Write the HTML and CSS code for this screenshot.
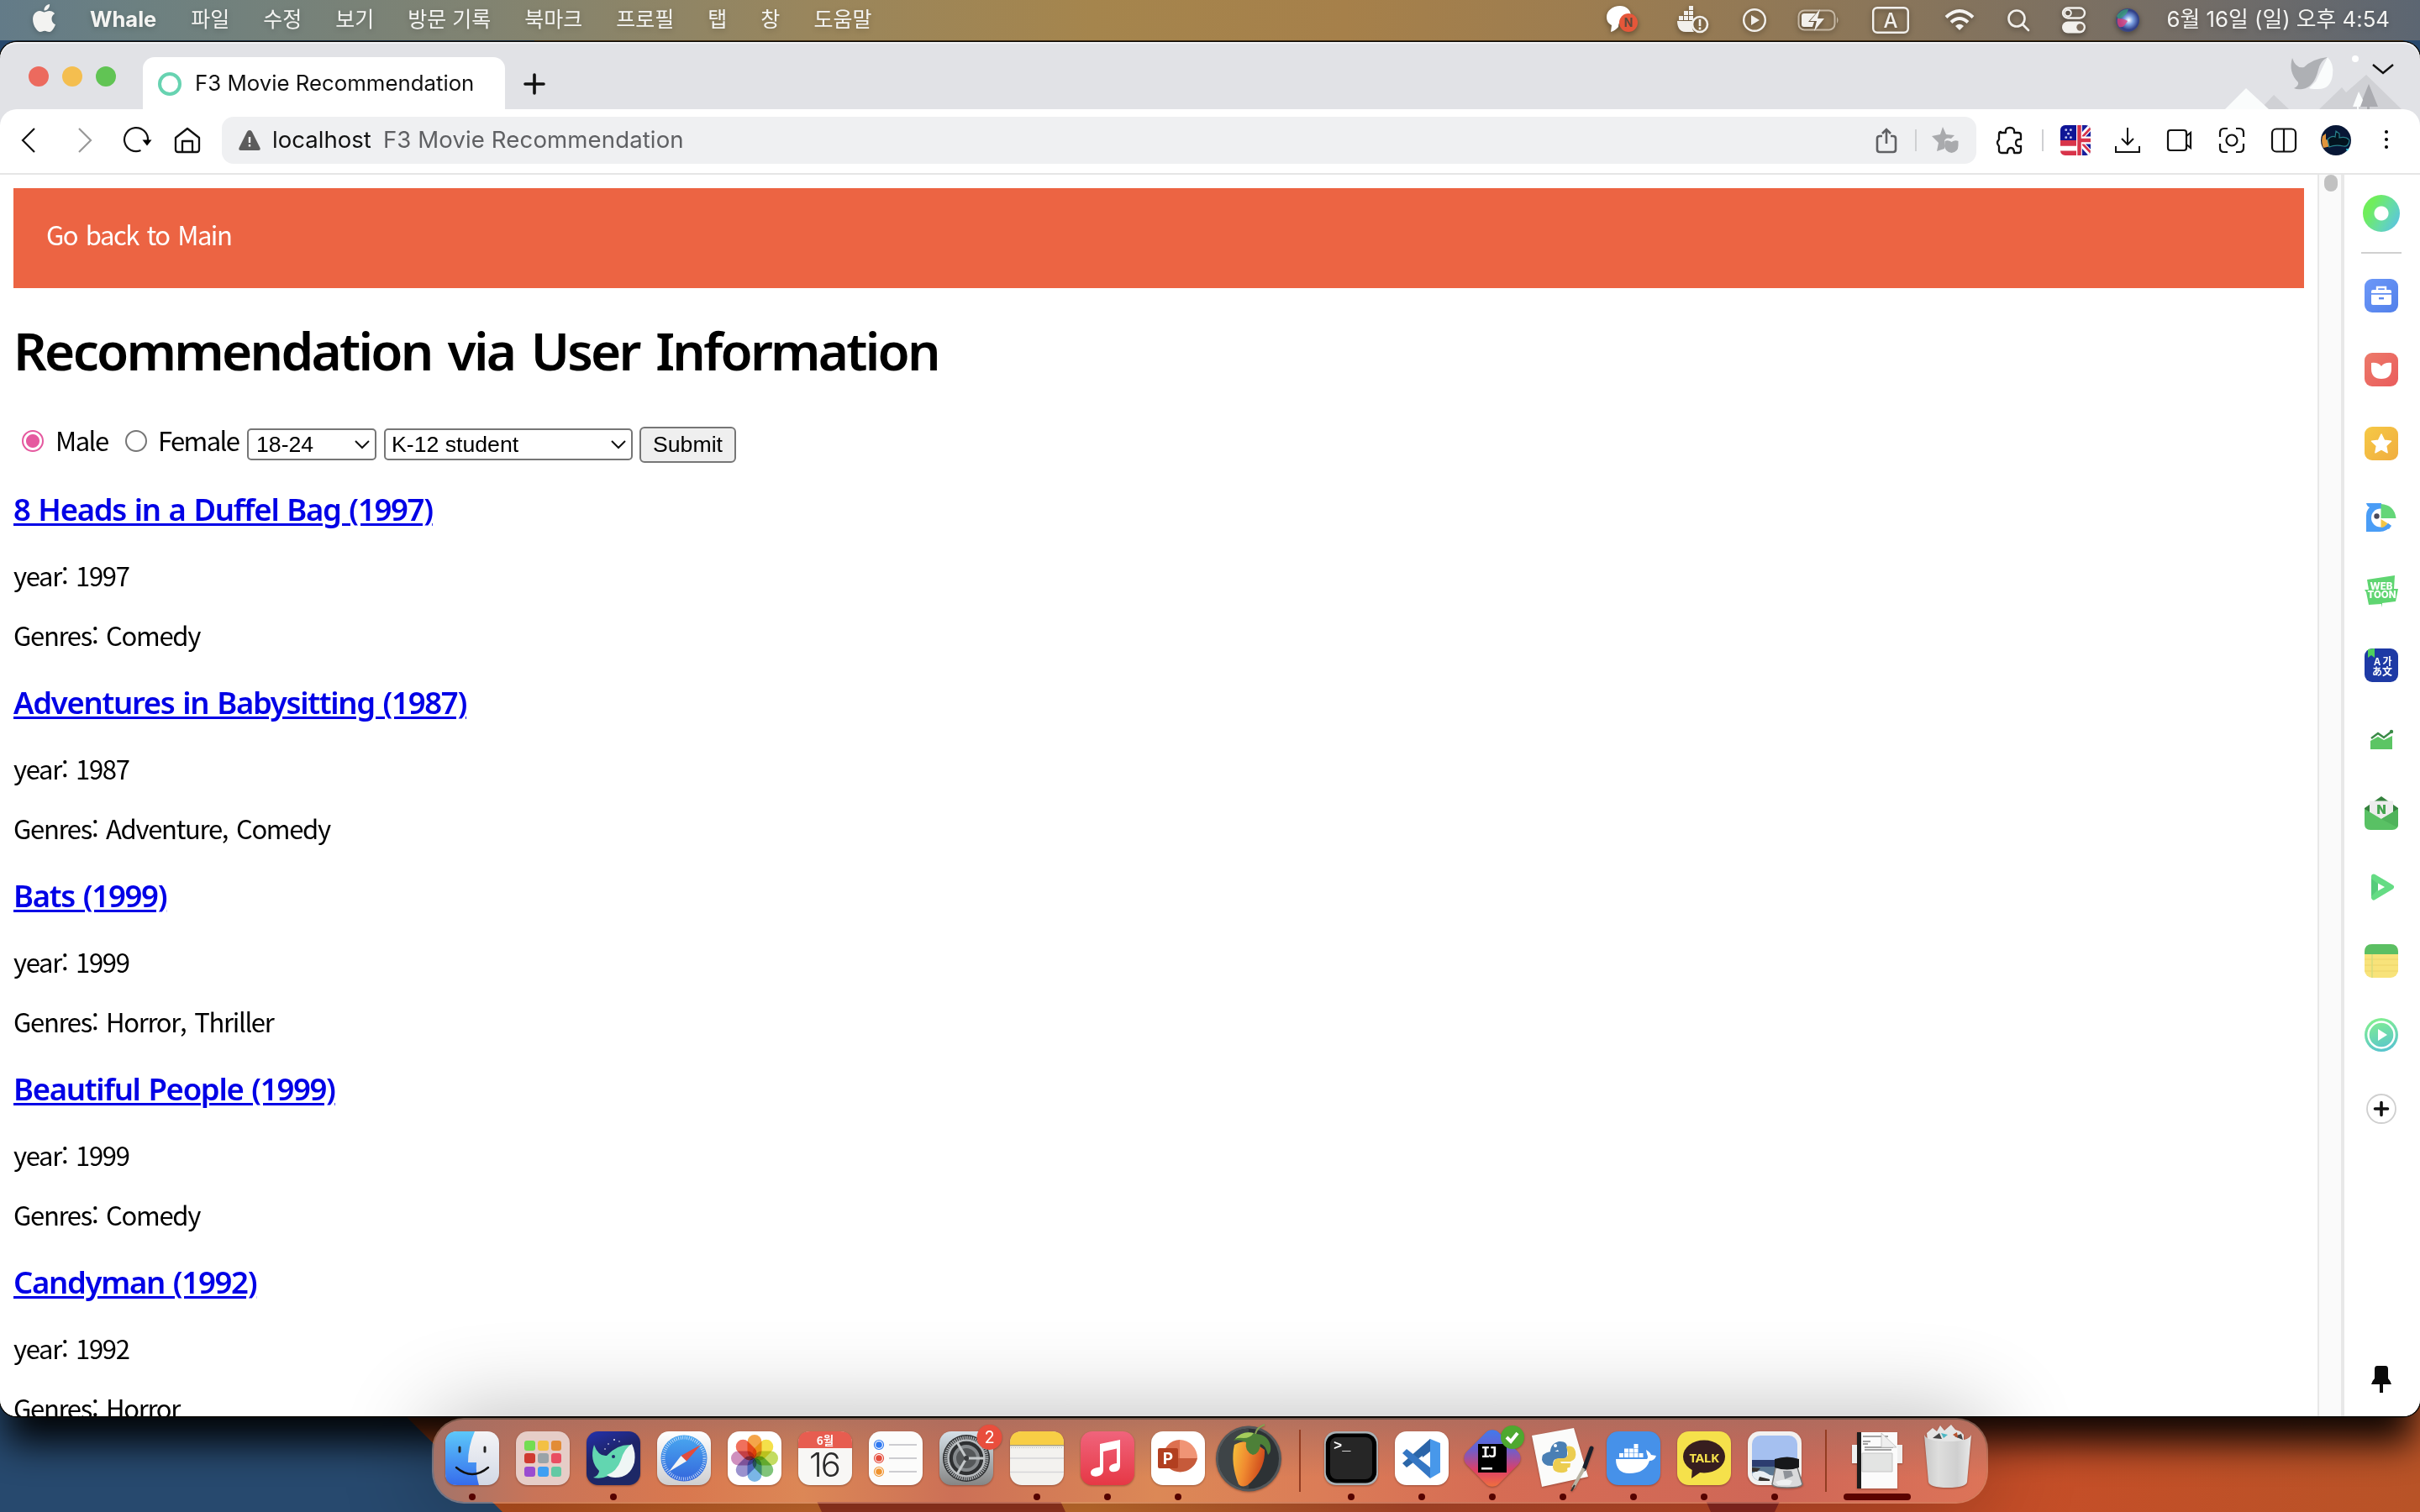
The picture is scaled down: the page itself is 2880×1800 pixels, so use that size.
FILE: index.html
```html
<!DOCTYPE html>
<html lang="ko">
<head>
<meta charset="utf-8">
<title>F3 Movie Recommendation</title>
<link rel="stylesheet" href="styles.css">
</head>
<body>
<div class="desktop">
  <svg class="wallpaper" viewBox="0 0 2880 1800" preserveAspectRatio="none" aria-hidden="true">
    <defs>
      <linearGradient id="wo" x1="480" x2="2880" y1="0" y2="0" gradientUnits="userSpaceOnUse">
        <stop offset="0" stop-color="#b4481b"/><stop offset=".2" stop-color="#c8692c"/><stop offset=".34" stop-color="#c8702e"/><stop offset=".5" stop-color="#b4492a"/><stop offset=".68" stop-color="#c04a28"/><stop offset=".8" stop-color="#c64e28"/><stop offset="1" stop-color="#b85327"/>
      </linearGradient>
    </defs>
    <rect width="2880" height="1800" fill="#27496e"/>
    <path d="M400 1600H2880V1800H598L485 1688z" fill="url(#wo)"/>
    <path d="M950 1740L978 1800H1268L1240 1740z" fill="#97351f"/>
    <path d="M2010 1740L2036 1800H2112L2140 1740z" fill="#8c2821"/>
    <path d="M636 48H2860V60H636z" fill="#6f4a1c"/>
  </svg>

  <header class="menubar">
    <svg class="apple" viewBox="0 0 24 24"><path fill="#f3f3f1" d="M12.152 6.896c-.948 0-2.415-1.078-3.96-1.04-2.04.027-3.91 1.183-4.961 3.014-2.117 3.675-.546 9.103 1.519 12.09 1.013 1.454 2.208 3.09 3.792 3.039 1.52-.065 2.09-.987 3.935-.987 1.831 0 2.35.987 3.96.948 1.637-.026 2.676-1.48 3.676-2.948 1.156-1.688 1.636-3.325 1.662-3.415-.039-.013-3.182-1.221-3.22-4.857-.026-3.04 2.48-4.494 2.597-4.559-1.429-2.09-3.623-2.324-4.39-2.376-2-.156-3.675 1.09-4.61 1.09zM15.53 3.83c.843-1.012 1.4-2.427 1.245-3.83-1.207.052-2.662.805-3.532 1.818-.78.896-1.454 2.338-1.273 3.714 1.338.104 2.715-.688 3.559-1.701"/></svg>
    <b class="app-name">Whale</b>
    <nav class="menus"><span>파일</span><span>수정</span><span>보기</span><span>방문 기록</span><span>북마크</span><span>프로필</span><span>탭</span><span>창</span><span>도움말</span></nav>
    <div class="status">
      <svg class="st-chat" width="38" height="34" viewBox="0 0 38 34"><path fill="#fff" d="M17 1C8 1 1 7 1 14c0 5 2 8 6 10l-1 8c4-1 7-4 9-6 0-7 5-11 15-14C29 5 24 1 17 1z"/><circle cx="27" cy="21" r="11" fill="#e5573a"/><text x="27" y="26" text-anchor="middle" class="t-n">N</text></svg>
      <svg class="st-docker" width="38" height="34" viewBox="0 0 38 34" fill="#f2f0ec"><path d="M3 12h5v5H3zM9 12h5v5H9zM15 12h5v5h-5zM9 6h5v5H9zM15 6h5v5h-5zM15 0h5v5h-5zM1 18h20c-3 5-3 9 0 13H11C4 31 1 25 1 18z"/><circle cx="28" cy="22" r="9" fill="none" stroke="#f2f0ec" stroke-width="2.6"/><path d="M26.7 16h2.6v8h-2.6zM26.7 25.500h2.600v2.800h-2.600z"/></svg>
      <svg class="st-play" width="30" height="30" viewBox="0 0 30 30"><circle cx="15" cy="15" r="12.800" fill="none" stroke="#f2f0ec" stroke-width="2.400"/><path fill="#f2f0ec" d="M11 9l10 6-10 6z"/></svg>
      <svg class="st-bat" width="50" height="28" viewBox="0 0 50 28"><rect x="1.500" y="2.500" width="43" height="23" rx="7" fill="none" stroke="#c6b8a4" stroke-width="2"/><path fill="#c6b8a4" d="M47 10q3 4 0 8z"/><path fill="#f2f0ec" d="M8 6h14l-9 10h7l-2 6H8q-3 0-3-3V9q0-3 3-3z"/><path fill="#f2f0ec" d="M27 1L15 15h8l-3 12 12-15h-8z"/></svg>
      <svg class="st-a" width="44" height="32" viewBox="0 0 44 32"><rect x="1.200" y="1.200" width="41.600" height="29.600" rx="5" fill="none" stroke="#f2f0ec" stroke-width="2.400"/><text x="22" y="24.500" text-anchor="middle" class="t-a">A</text></svg>
      <svg class="st-wifi" width="36" height="26" viewBox="0 0 36 26"><g fill="none" stroke="#f5f3f0" stroke-width="4"><path d="M2 9.500q16-15 32 0"/><path d="M8 15.500q10-9 20 0"/></g><path fill="#f5f3f0" d="M18 25l-5-5q5-4.500 10 0z"/></svg>
      <svg class="st-find" width="28" height="28" viewBox="0 0 28 28"><g fill="none" stroke="#f2f0ec" stroke-width="2.600" stroke-linecap="round"><circle cx="12" cy="12" r="9.500"/><path d="M19 19l7 7"/></g></svg>
      <svg class="st-ctl" width="30" height="32" viewBox="0 0 30 32"><rect x="2" y="1.500" width="26" height="12" rx="6" fill="none" stroke="#f2f0ec" stroke-width="2.400"/><circle cx="8" cy="7.500" r="3.800" fill="none" stroke="#f2f0ec" stroke-width="2"/><rect x="1" y="17.500" width="28" height="14" rx="7" fill="#f2f0ec"/><circle cx="22.500" cy="24.500" r="4.200" fill="#7a6c5c"/></svg>
      <svg class="st-siri" width="30" height="30" viewBox="0 0 30 30"><defs><radialGradient id="siri" cx=".55" cy=".5" r=".55"><stop offset="0" stop-color="#fff"/><stop offset=".35" stop-color="#7a9fe0"/><stop offset=".75" stop-color="#2f3f88"/><stop offset="1" stop-color="#4a4f78"/></radialGradient></defs><circle cx="15" cy="15" r="14" fill="url(#siri)"/><path d="M2 10q6-9 14-8-2 8-12 12z" fill="#3aa878" opacity=".7"/><path d="M3 13q8 0 12 3-5 9-10 7-3-4-2-10z" fill="#e0407c" opacity=".8"/></svg>
      <span class="clock">6월 16일 (일) 오후 4:54</span>
    </div>
  </header>

  <section class="window">
    <div class="tabstrip">
      <div class="lights"><i class="red"></i><i class="yellow"></i><i class="green"></i></div>
      <div class="tab"><i class="spinner"></i><span>F3 Movie Recommendation</span></div>
      <svg class="plus" width="28" height="28" viewBox="0 0 28 28"><path d="M14 3v22M3 14h22" stroke="#111" stroke-width="3.600" stroke-linecap="round"/></svg>
      <svg class="scene" width="230" height="80" viewBox="0 0 230 80">
        <path fill="#d0d1d5" d="M110 80l27-26 5 6 24-21 42 41z"/>
        <path fill="#d0d1d5" d="M40 80l16-17 18 17z"/>
        <path fill="#fafcfc" d="M-2 80l25-25 27 25z"/>
        <path fill="#aaabb0" d="M169 50l-11 27h9v3h3v-3h10z"/><path fill="#fafcfc" d="M157 59l-7 18h5v3h2v-3h2l3-8z"/>
        <path fill="#fafcfc" d="M120 18q8 8 6 21-2 18-19 17-7 0-9-1l8-8q8-17 14-29z"/>
        <path fill="#aeb0b4" d="M78 19q4 13 14 11 10-10 28-12-9 5-11 15-5 21-19 23-6 1-10-1 6-3 5-7-12-12-7-29z"/>
        <circle cx="153" cy="20" r="4" fill="#fff"/>
        <path d="M174 27l12 10 12-10" fill="none" stroke="#111" stroke-width="2.400"/>
      </svg>
    </div>

    <div class="toolbar">
      <svg width="56" height="36" viewBox="0 0 56 36"><path d="M34 4L20 18l14 14" fill="none" stroke="#111" stroke-width="2.200"/></svg>
      <svg width="56" height="36" viewBox="0 0 56 36"><path d="M31 4l14 14-14 14" fill="none" stroke="#999" stroke-width="2.200"/></svg>
      <svg width="72" height="36" viewBox="0 0 72 36"><path d="M48.500 30A14 14 0 1 1 57 18" fill="none" stroke="#111" stroke-width="2.200"/><path d="M50.500 17.500h11l-5.500 7z"/></svg>
      <svg width="74" height="36" viewBox="0 0 74 36"><path d="M18 15L32 4l14 11v14q0 3-3 3H21q-3 0-3-3zM26 32V19h12v13" fill="none" stroke="#111" stroke-width="2.300" stroke-linejoin="round"/></svg>
      <div class="address">
        <svg width="28" height="26" viewBox="0 0 28 26"><path d="M14 1q2 0 3 2l9.500 19q1 3-2 3H3.500q-3 0-2-3L11 3q1-2 3-2z" fill="#5c5c5c"/><path d="M12.800 9h2.400v7h-2.400zM12.800 18h2.400v2.400h-2.400z" fill="#fff"/></svg>
        <span class="host">localhost</span><span class="page-name">F3 Movie Recommendation</span>
        <svg class="share" width="26" height="32" viewBox="0 0 26 32"><path d="M8 11H5q-3 0-3 3v13q0 3 3 3h16q3 0 3-3V14q0-3-3-3h-3M13 20V3M8 8l5-5 5 5" fill="none" stroke="#5f6063" stroke-width="2.600"/></svg>
        <i class="bar"></i>
        <svg class="star" width="34" height="32" viewBox="0 0 34 32"><path fill="#a9aaad" d="M14 0l4 9 10 1-4 4q-7-2-8 3l1 6-1 3-9 3 2-10-8-8 10-2z"/><path fill="#a9aaad" d="M16.500 17q4-2 8 1 4-3 8-1v5q0 8-8 9-8-1-8-9z"/></svg>
      </div>
      <svg class="puzzle" width="32" height="34" viewBox="0 0 32 34"><path d="M5 8h6q-1-6 5-6t5 6h5q3 0 3 3v5q-6-1-6 4t6 4v5q0 3-3 3h-5q0-6-4-6t-4 6H6q-3 0-3-3v-5q-2-2-2-4t2-4v-6q0-3 2-3z" fill="none" stroke="#111" stroke-width="2.300" stroke-linejoin="round"/></svg>
      <i class="bar"></i>
      <div class="exts">
        <svg width="32" height="32" viewBox="0 0 32 32"><clipPath id="fl"><rect width="32" height="32" rx="5"/></clipPath><g clip-path="url(#fl)"><path fill="#fff" d="M0 0h32v32H0z"/><path fill="#0f1596" d="M0 0h17v17H0z"/><path fill="#d8344a" d="M0 16h17v6H0zM0 27h17v5H0z"/><g fill="#c3c6ee"><circle cx="6" cy="5" r="1.300"/><circle cx="11" cy="5" r="1.300"/><circle cx="8.500" cy="9" r="1.300"/><circle cx="6" cy="13" r="1.300"/><circle cx="11" cy="13" r="1.300"/></g><path fill="#1a1f9c" d="M19 0h13v32H19z"/><path d="M19 16L32 2M19 16l13 14" stroke="#fff" stroke-width="6"/><path d="M20 16L33 2M20 16l13 14" stroke="#d8344a" stroke-width="2.500"/><path fill="#fff" d="M17 0h6v32h-6zM19 12h13v8H19z"/><path fill="#d8344a" d="M18 0h4v32h-4zM20 14h12v4H20z"/></g></svg>
        <svg width="32" height="32" viewBox="0 0 32 32"><path d="M16 1v20M9 14l7 7 7-7M2 23v7h28v-7" fill="none" stroke="#111" stroke-width="2"/></svg>
        <svg width="32" height="32" viewBox="0 0 32 32"><path d="M5 4h16q3 0 3 3v18q0 3-3 3H5q-3 0-3-3V7q0-3 3-3zM24 11l5-4v18l-5-4" fill="none" stroke="#111" stroke-width="2.200"/></svg>
        <svg width="32" height="32" viewBox="0 0 32 32"><g fill="none" stroke="#111" stroke-width="2.200"><path d="M11 2H7Q2 2 2 7v5M21 2h4q5 0 5 5v5M11 30H7q-5 0-5-5v-5M21 30h4q5 0 5-5v-5"/><circle cx="16" cy="16" r="6.500"/></g></svg>
        <svg width="32" height="32" viewBox="0 0 32 32"><rect x="2" y="2.500" width="28" height="27" rx="5" fill="none" stroke="#111" stroke-width="2.200"/><path d="M16 3v26" stroke="#111" stroke-width="2.200"/></svg>
        <svg width="36" height="36" viewBox="0 0 36 36"><circle cx="18" cy="18" r="18" fill="#081736"/><path d="M2 13l4-3v7l6 2v6l-9 2q-3-7-1-14z" fill="#e0953c"/><path d="M8 17q5-5 9-3l1-7 4 3v5q8-2 12 3-1 8-7 7-10-2-17 1z" fill="#03131f" stroke="#27808b" stroke-width="1.200"/><path d="M30 28h4l-3 3z" fill="#3cc9dd"/></svg>
        <svg width="32" height="32" viewBox="0 0 32 32"><circle cx="14" cy="6" r="2"/><circle cx="14" cy="15" r="2"/><circle cx="14" cy="24" r="2"/></svg>
      </div>
    </div>

    <div class="body">
      <main class="page">
        <nav class="topnav"><a>Go back to Main</a></nav>
        <h1>Recommendation via User Information</h1>
        <form class="filters">
          <i class="radio on"></i><label class="male">Male</label>
          <i class="radio off"></i><label class="female">Female</label>
          <div class="select age"><span>18-24</span><svg width="18" height="10" viewBox="0 0 18 10"><path d="M1 1l8 8 8-8" fill="none" stroke="#111" stroke-width="2"/></svg></div>
          <div class="select job"><span>K-12 student</span><svg width="18" height="10" viewBox="0 0 18 10"><path d="M1 1l8 8 8-8" fill="none" stroke="#111" stroke-width="2"/></svg></div>
          <button type="button">Submit</button>
        </form>
        <article><h3><a>8 Heads in a Duffel Bag (1997)</a></h3><p>year: 1997</p><p>Genres: Comedy</p></article>
        <article><h3><a>Adventures in Babysitting (1987)</a></h3><p>year: 1987</p><p>Genres: Adventure, Comedy</p></article>
        <article><h3><a>Bats (1999)</a></h3><p>year: 1999</p><p>Genres: Horror, Thriller</p></article>
        <article><h3><a>Beautiful People (1999)</a></h3><p>year: 1999</p><p>Genres: Comedy</p></article>
        <article><h3><a>Candyman (1992)</a></h3><p>year: 1992</p><p>Genres: Horror</p></article>
      </main>
      <div class="scroll"><i></i></div>
      <aside class="side">
        <i class="ring"></i>
        <i class="rule"></i>
        <div class="apps">
          <svg viewBox="0 0 40 40"><defs><linearGradient id="g1" x2="1" y2="1"><stop stop-color="#6c98f8"/><stop offset="1" stop-color="#5280ea"/></linearGradient></defs><rect width="40" height="40" rx="9" fill="url(#g1)"/><path d="M15 14v-4h10v4" fill="none" stroke="#fff" stroke-width="2.400"/><path fill="#fff" d="M10 13h20q2 0 2 2v2H8v-2q0-2 2-2zM8 18.800h24V29q0 2-2 2H10q-2 0-2-2z"/><path fill="#5b88ef" d="M17 22h6v2.400h-6z"/></svg>
          <svg viewBox="0 0 40 40"><defs><linearGradient id="g2" x2="1" y2="1"><stop stop-color="#ec7a6a"/><stop offset="1" stop-color="#ea5c5c"/></linearGradient></defs><rect width="40" height="40" rx="9" fill="url(#g2)"/><path fill="#fff" d="M8 12q8-1 12 4 4-5 12-4v7q0 12-12 12T8 19z"/></svg>
          <svg viewBox="0 0 40 40"><defs><linearGradient id="g3" x2="1" y2="1"><stop stop-color="#f6c945"/><stop offset="1" stop-color="#f0ad40"/></linearGradient></defs><rect width="40" height="40" rx="9" fill="url(#g3)"/><path fill="#fff" stroke="#fff" stroke-width="1.500" stroke-linejoin="round" d="M20 9l3.500 7.300 8 1-5.900 5.500 1.500 8-7.100-3.900-7.100 3.900 1.500-8-5.900-5.500 8-1z"/></svg>
          <svg viewBox="0 0 40 40"><path fill="#4a9df6" d="M2 3h18v4l12 22q-5 8-14 8H2V18q0-6 4-10-3-1-4-5z"/><circle cx="19" cy="20.500" r="11" fill="#fff"/><path fill="#fff" d="M20 7h19v20l-7 3-12-8z"/><path fill="#64d678" d="M19.500 4q16 1 18 17h-18z"/><path fill="#f3c545" d="M19.500 22l8 5q-3 5-8 5z"/><path fill="#4a9df6" d="M28 27l4 3-3 4-5-3z"/><circle cx="14.500" cy="18.500" r="3.200" fill="#4a4a5c"/></svg>
          <svg viewBox="0 0 40 40"><path fill="#5fd571" d="M3 6l33-5-1 16h5l-3 15-16 2v5l-1-4-15 1-3-15-2-3h5z"/><text x="20" y="18" text-anchor="middle" class="t-web">WEB</text><text x="20.500" y="27.500" text-anchor="middle" class="t-web">TOON</text></svg>
          <svg viewBox="0 0 40 40"><rect width="40" height="40" rx="9" fill="#1e3aa5"/><path fill="#4fd05d" d="M4 1l8-1v11l-4-3-4 3z"/><text x="15" y="20" text-anchor="middle" class="t-tr">A</text><text x="27" y="20" text-anchor="middle" class="t-tr">가</text><text x="15" y="32" text-anchor="middle" class="t-tr">あ</text><text x="27" y="32" text-anchor="middle" class="t-tr">文</text></svg>
          <svg viewBox="0 0 40 40"><path fill="#5cc564" d="M7 22l9-5 7 4 10-5v16H7z"/><path d="M8 19l8-6 7 5 9-7" fill="none" stroke="#3a8a47" stroke-width="2.400"/><circle cx="32" cy="11" r="2.200" fill="#3a8a47"/></svg>
          <svg viewBox="0 0 40 40"><path fill="#35823e" d="M0 14l20-14 20 14v8H0z"/><path fill="#ececec" d="M6 5.500h28V24L20 30 6 24z"/><path fill="#59c164" d="M0 15l20 12 20-12v18q0 7-7 7H7q-7 0-7-7z"/><path fill="#4fb35b" d="M20 27l20-12v18q0 2-1 4z"/><text x="20" y="20.500" text-anchor="middle" class="t-mail">N</text></svg>
          <svg viewBox="0 0 40 40"><path fill="#65dc84" stroke="#65dc84" stroke-width="6" stroke-linejoin="round" d="M11 7.500l21 12.500-21 12.500z"/><path fill="#4cc274" d="M8 10l9 7v5l-9 9z" opacity=".6"/><path fill="#fff" d="M16 15.500l8 4.500-8 4.500z"/></svg>
          <svg viewBox="0 0 40 40"><rect width="40" height="40" rx="9" fill="#f8e37a"/><path fill="#5bbf63" d="M9 0h22q9 0 9 9v3H0V9q0-9 9-9z"/><path d="M0 18h40M0 25h40M0 32h40" stroke="#eed468" stroke-width="1"/><path d="M9 12v28" stroke="#d5dd7c" stroke-width="1.500"/></svg>
          <svg viewBox="0 0 40 40"><defs><linearGradient id="g4" x1=".3" x2=".6" y2="1"><stop stop-color="#83f08e"/><stop offset="1" stop-color="#58c4cf"/></linearGradient></defs><circle cx="20" cy="20" r="20" fill="url(#g4)"/><circle cx="20" cy="20" r="15.500" fill="none" stroke="#fff" stroke-width="2.400"/><path fill="#fff" d="M16 13l11 7-11 7z"/></svg>
          <svg viewBox="0 0 40 40"><circle cx="20" cy="20" r="17" fill="#fff" stroke="#cfcfcf" stroke-width="1.800"/><path d="M20 12.500v15M12.500 20h15" stroke="#111" stroke-width="3.600" stroke-linecap="round"/></svg>
        </div>
        <svg class="pin" width="24" height="32" viewBox="0 0 24 32"><path fill="#0a0a0a" d="M7 0h10q3 0 3 4v11q3 3 4 7H0q1-4 4-7V4q0-4 3-4zM10 22h4v10h-4z"/></svg>
      </aside>
    </div>
  </section>

  <div class="dock-layer"><div class="dock">
    <div class="item run"><svg viewBox="0 0 64 64"><defs><linearGradient id="fa" y2="1" x2="0"><stop stop-color="#5cc8fa"/><stop offset="1" stop-color="#366cec"/></linearGradient><linearGradient id="fb" y2="1" x2="0"><stop stop-color="#f4f4f6"/><stop offset="1" stop-color="#d2d9e6"/></linearGradient></defs><rect width="64" height="64" rx="14" fill="url(#fb)"/><path fill="url(#fa)" d="M14 0h21q-8 18-8 37h10q-1 14 3 27H14Q0 64 0 50V14Q0 0 14 0z"/><path d="M17 19v5M47 19v5" stroke="#222" stroke-width="3" stroke-linecap="round"/><path d="M13 43q19 16 38 0" fill="none" stroke="#111" stroke-width="2.400" stroke-linecap="round"/></svg></div>
    <div class="item"><svg viewBox="0 0 64 64"><rect width="64" height="64" rx="14" fill="#e6cdc7"/><g><rect x="10" y="11" width="13" height="12" rx="3" fill="#74dd52"/><rect x="26" y="11" width="13" height="12" rx="3" fill="#f3c044"/><rect x="42" y="11" width="12" height="12" rx="3" fill="#e28c36"/><rect x="10" y="26" width="13" height="12" rx="3" fill="#cf3a30"/><rect x="26" y="26" width="13" height="12" rx="3" fill="#9aa3a8"/><rect x="42" y="26" width="12" height="12" rx="3" fill="#e94e62"/><rect x="10" y="42" width="13" height="12" rx="3" fill="#9a4cd0"/><rect x="26" y="42" width="13" height="12" rx="3" fill="#3f9ff2"/><rect x="42" y="42" width="12" height="12" rx="3" fill="#62c9a4"/></g></svg></div>
    <div class="item run"><svg viewBox="0 0 64 64"><defs><linearGradient id="wh" y2="1" x2=".4"><stop stop-color="#2431ad"/><stop offset=".5" stop-color="#1e2468"/><stop offset="1" stop-color="#1d2866"/></linearGradient></defs><rect width="64" height="64" rx="14" fill="url(#wh)"/><path fill="#62d6b0" d="M9 16q5 14 15 13Q36 15 54 16L40 44 26 53q-9 4-18 2 7-3 7-8Q3 35 9 16z"/><path fill="#eff6f5" d="M54 15q5 10 3 22-5 18-23 18-6 0-10-3 12-4 17-18 4-14 13-19z"/><circle cx="32" cy="30" r="2" fill="#1f2b6b"/><g fill="#fff"><circle cx="33" cy="10" r=".9"/><circle cx="26" cy="15" r=".8"/><circle cx="22" cy="21" r=".8"/><circle cx="39" cy="12" r=".7"/></g></svg></div>
    <div class="item"><svg viewBox="0 0 64 64"><defs><linearGradient id="sf" y2="1" x2="0"><stop stop-color="#49a8f0"/><stop offset="1" stop-color="#3466dc"/></linearGradient><linearGradient id="sg" y2="1" x2="0"><stop stop-color="#fff"/><stop offset="1" stop-color="#cfcfd1"/></linearGradient></defs><rect width="64" height="64" rx="14" fill="url(#sg)"/><circle cx="32" cy="32" r="27.500" fill="url(#sf)"/><circle cx="32" cy="32" r="24.500" fill="none" stroke="#d7e6fa" stroke-width="4" stroke-dasharray=".8 1.766"/><path fill="#e34b3b" d="M52 16L28.500 29 35 35.500z"/><path fill="#f4f4f4" d="M14 48l14.500-19L35 35.500z"/></svg></div>
    <div class="item"><svg viewBox="0 0 64 64"><rect width="64" height="64" rx="14" fill="#fff"/><g class="petals"><rect x="23.500" y="4" width="17" height="28" rx="8.500" fill="#f5a54a"/><rect x="23.500" y="4" width="17" height="28" rx="8.500" fill="#f4e04a" transform="rotate(45 32 32)"/><rect x="23.500" y="4" width="17" height="28" rx="8.500" fill="#c3dc62" transform="rotate(90 32 32)"/><rect x="23.500" y="4" width="17" height="28" rx="8.500" fill="#80c47a" transform="rotate(135 32 32)"/><rect x="23.500" y="4" width="17" height="28" rx="8.500" fill="#7ab6e6" transform="rotate(180 32 32)"/><rect x="23.500" y="4" width="17" height="28" rx="8.500" fill="#9a92ce" transform="rotate(225 32 32)"/><rect x="23.500" y="4" width="17" height="28" rx="8.500" fill="#cf90be" transform="rotate(270 32 32)"/><rect x="23.500" y="4" width="17" height="28" rx="8.500" fill="#f0705c" transform="rotate(315 32 32)"/></g></svg></div>
    <div class="item"><svg viewBox="0 0 64 64"><rect width="64" height="64" rx="14" fill="#f8f7f5"/><path fill="#e75d50" d="M14 0h36q14 0 14 14v6H0v-6Q0 0 14 0z"/><text x="32" y="15.500" text-anchor="middle" class="t-mon">6월</text><text x="31" y="54" text-anchor="middle" class="t-day">16</text></svg></div>
    <div class="item"><svg viewBox="0 0 64 64"><rect width="64" height="64" rx="14" fill="#fcfcfb"/><g fill="#fff" stroke-width="1.200"><circle cx="12" cy="16" r="5.500" stroke="#2f78f0"/><circle cx="12" cy="32" r="5.500" stroke="#e44c3c"/><circle cx="12" cy="48" r="5.500" stroke="#ef9430"/></g><circle cx="12" cy="16" r="3.800" fill="#2f78f0"/><circle cx="12" cy="32" r="3.800" fill="#e44c3c"/><circle cx="12" cy="48" r="3.800" fill="#ef9430"/><path d="M24 16h33M24 32h33M24 48h33" stroke="#bdbdc4" stroke-width="1.500"/></svg></div>
    <div class="item"><svg viewBox="0 0 64 64"><defs><linearGradient id="st" y2="1" x2="0"><stop stop-color="#d5e0e8"/><stop offset="1" stop-color="#868685"/></linearGradient></defs><rect width="64" height="64" rx="14" fill="url(#st)"/><circle cx="32" cy="32" r="28" fill="#2e3032"/><circle cx="32" cy="32" r="24.500" fill="none" stroke="#a9adb0" stroke-width="4" stroke-dasharray="1.500 1"/><circle cx="32" cy="32" r="21.500" fill="none" stroke="#b9bdc0" stroke-width="2.500"/><circle cx="32" cy="32" r="14" fill="#55585a" stroke="#85898c" stroke-width="4"/><path d="M32 32h22M32 32L21 13M32 32L21 51" stroke="#c4c8ca" stroke-width="3"/><circle cx="32" cy="32" r="3" fill="#3a3c3e"/><circle cx="59.500" cy="7" r="15" fill="#e94e3d"/><text x="59.500" y="14" text-anchor="middle" class="t-badge">2</text></svg></div>
    <div class="item run"><svg viewBox="0 0 64 64"><rect width="64" height="64" rx="14" fill="#f3f2ef"/><path fill="#f8ce45" d="M14 0h36q14 0 14 14v2H0v-2Q0 0 14 0z"/><path d="M0 16.700h64" stroke="#a79f80" stroke-width="1.400"/><path d="M1 19.500h62" stroke="#bbb" stroke-dasharray="1 1.500"/><path d="M0 32h64M0 48.500h64" stroke="#d5d5d8" stroke-width="1.300"/></svg></div>
    <div class="item run"><svg viewBox="0 0 64 64"><defs><linearGradient id="mu" y2="1" x2="0"><stop stop-color="#f0647c"/><stop offset="1" stop-color="#e63845"/></linearGradient></defs><rect width="64" height="64" rx="14" fill="url(#mu)"/><path fill="#fff" d="M23 15l24-5v31q0 6-6 7-7 1-7-4 0-4 6-5.500l3-.5V20.500L27 24v22q0 6-7 7.500-8 1-8-4.500 0-4 6-5.500l5-1z"/></svg></div>
    <div class="item run"><svg viewBox="0 0 64 64"><rect width="64" height="64" rx="14" fill="#fff"/><path fill="#dd7050" d="M34 10v22H14a20.500 21 0 0 1 20-22z"/><path fill="#f09475" d="M34 10a21 22 0 0 1 21 22H34z"/><path fill="#c65a3a" d="M55 32a21 21 0 0 1-41 0z"/><rect x="8" y="20" width="24" height="24" rx="2" fill="#b23f20"/><text x="20" y="38.500" text-anchor="middle" class="t-p">P</text></svg></div>
    <div class="item"><svg viewBox="0 0 64 64"><circle cx="32" cy="32.500" r="39" fill="#54585b"/><circle cx="32" cy="32.500" r="36" fill="#2d3235"/><path fill="#3e4447" d="M32-3.500v72a36 36 0 0 1 0-72z"/><defs><linearGradient id="fr" x1="0" x2="1" y2=".3"><stop stop-color="#f6c23a"/><stop offset=".5" stop-color="#f08a30"/><stop offset="1" stop-color="#cf4c1c"/></linearGradient></defs><path fill="url(#fr)" d="M15 16q16-10 36 6 1 20-14 36-10 12-17 5-10-25-5-47z"/><path fill="#4d8038" d="M14 11q11-14 27-8 14 1 17 14 1 8-3 11-3-12-9-13-1 12-9 13-10-4-8-15-9-4-15-2z"/><path fill="#a5cc5c" d="M16 9Q24-1 38 2q-4 6-12 6-6-1-10 1z"/><path d="M40 3q2-8 11-11" fill="none" stroke="#86a052" stroke-width="2"/></svg></div>
    <i class="sep"></i>
    <div class="item run"><svg viewBox="0 0 64 64"><rect width="64" height="64" rx="14" fill="#aab2b6"/><rect x="1.800" y="2.500" width="60.400" height="59" rx="13" fill="#000"/><rect x="7" y="7" width="50" height="50" rx="8" fill="#262626"/><text x="11" y="22" class="t-term">&gt;_</text></svg></div>
    <div class="item run"><svg viewBox="0 0 64 64"><rect width="64" height="64" rx="14" fill="#fff"/><path fill="#2b66a8" d="M9 38l5 5 28-21V9z"/><path fill="#3577c4" d="M9 26l5-5 28 22v13z"/><path fill="#2c64a8" d="M31 21L42 9v15l-9 7z"/><path fill="#4898ea" d="M42 9l12 5v35l-12 7z"/></svg></div>
    <div class="item run"><svg viewBox="0 0 64 64"><defs><linearGradient id="ij" y2="1" x2="1"><stop stop-color="#3a7ff0"/><stop offset=".35" stop-color="#6a5fd0"/><stop offset=".68" stop-color="#dd3f68"/><stop offset="1" stop-color="#f37a35"/></linearGradient></defs><rect x="5" y="5" width="54" height="54" rx="11" transform="rotate(45 32 32)" fill="url(#ij)"/><path d="M15 15h34v34H15z"/><text x="18.500" y="31" class="t-ij">IJ</text><path fill="#fff" d="M19 43h13v2.500H19z"/><circle cx="56" cy="7" r="14" fill="#4ea82f"/><path d="M49 7l5 5 8-10" fill="none" stroke="#fff" stroke-width="4"/></svg></div>
    <div class="item run"><svg viewBox="0 0 64 64"><path fill="#fbfbfa" d="M-5 5l50-9 17 58-55 12z"/><path fill="#4a7fb4" d="M17 27q-1-12 10-15 10-1 10 7v9q0 4-5 5h-8q-4 0-4 8-11 1-13-7-1-8 10-10h10l-1-2z"/><path fill="#eccd50" d="M37 20q9-2 11 6 2 9-6 12H30l1 2h11q0 9-8 11-12 1-13-6 0-10 6-11h7q5-1 5-6z" transform="translate(-1 -2)"/><circle cx="23" cy="17" r="2" fill="#fff"/><circle cx="39" cy="45" r="2" fill="#fff"/><path d="M66 20L57 45" stroke="#1b1f2b" stroke-width="5" stroke-linecap="round"/><path d="M57 44L44 67" stroke="#b9b4a4" stroke-width="4"/><path d="M46 64l-4 7" stroke="#333" stroke-width="2"/></svg></div>
    <div class="item run"><svg viewBox="0 0 64 64"><rect width="64" height="64" rx="14" fill="#4691e9"/><path fill="#fff" d="M11 33h37q2-2 0-6l-1-5q5 3 6 6l6 1q-2 6-8 6-5 15-24 15Q11 50 11 33zM15 26h5v5h-5zM21 26h5v5h-5zM26.800 26h5v5h-5zM32.500 26h5v5h-5zM38.500 26h5v5h-5zM21 20.500h5v5h-5zM26.800 20.500h5v5h-5zM32.500 20.500h5v5h-5zM32.500 15h5v5h-5z"/></svg></div>
    <div class="item run"><svg viewBox="0 0 64 64"><rect width="64" height="64" rx="14" fill="#f5e14b"/><ellipse cx="32" cy="30" rx="25" ry="19.500" fill="#371e1f"/><path fill="#371e1f" d="M18 42l-1 14 13-9z"/><text x="32" y="36.500" text-anchor="middle" class="t-talk">TALK</text></svg></div>
    <div class="item run"><svg viewBox="0 0 64 64"><rect width="64" height="64" rx="14" fill="#f3f1ef"/><clipPath id="pv"><rect x="5" y="5" width="54" height="54" rx="10"/></clipPath><g clip-path="url(#pv)"><path fill="#a5c0f0" d="M5 5h54v54H5z"/><path fill="#2c3d70" d="M5 34h54v8H5z"/><path fill="#5b7893" d="M5 42h54v17H5z"/><path fill="#e8eef2" d="M5 50q10-6 18 0t14-2v11H5z"/><path fill="#38332f" d="M5 43l10 1-4 4H5zM14 54l12 3v3H12z"/></g><path fill="#d9dadb" stroke="#777" stroke-width="1.500" d="M33 43h26l6 20q-2 4-18 4t-18-4z"/><path fill="#8f9399" d="M42 47h10l2 6-10 4z"/><path fill="#eef0f1" d="M33 60q12-5 20-1l-3 5H36z"/><path fill="#17181a" d="M32 33q15-5 29 0v10q-14 5-29 0z"/></svg></div>
    <i class="sep"></i>
    <div class="item wide"><svg viewBox="0 0 64 64"><path fill="#f0f0f0" d="M2 16h60v22H2z"/><path fill="#fbfbfb" d="M8 1h48v67H8z"/><path fill="#1c1c1c" d="M8 1h5v67H8z"/><path d="M15 6h30M15 12h9M15 15h6M17 19h34M17 22h32" stroke="#888" stroke-width="1.300"/><path fill="#e3e4e3" stroke="#c5c5c5" d="M14 26h36v22H14z"/><path fill="#efefef" stroke="#bbb" stroke-width=".8" d="M37 2l18 17H37z"/></svg></div>
    <div class="item"><svg viewBox="0 0 64 64"><path fill="#e4e4e4" d="M7 2l7-6 5 4 4-7 5 6 8-7 5 6 6 2 4 4v8H8z"/><path fill="#444" d="M14 8l8-6 3 7zM40 6l8-3 2 7z"/><path fill="#4bb7c4" d="M24 2l8 2-5 4z"/><path fill="#b8532f" d="M38 4l5-3 1 7z"/><defs><linearGradient id="tr" x2="1"><stop stop-color="#c8c8c8"/><stop offset=".3" stop-color="#dededd"/><stop offset=".7" stop-color="#cfcfcf"/><stop offset="1" stop-color="#e8e8e8"/></linearGradient></defs><path fill="url(#tr)" d="M4 4q3 8 28 8T60 4l-5 56q-1 7-23 7T9 60z"/></svg></div>
  </div></div>
</div>
</body>
</html>
```
FILE: styles.css
```css
* { box-sizing: border-box; }
body { margin: 0; }
svg { display: block; overflow: visible; flex: none; }
i { display: block; flex: none; }

.desktop { position: relative; width: 2880px; height: 1800px; overflow: hidden; font-family: Inter, "Noto Sans CJK KR", sans-serif; color: #111; }
.wallpaper { position: absolute; inset: 0; width: 2880px; height: 1800px; }

/* menu bar */
.menubar { position: relative; display: flex; align-items: center; height: 48px; padding: 0 36px 0 36px; color: #f4f4f2; background: linear-gradient(90deg, #637b88 0, #6c8081 160px, #808372 560px, #99865d 960px, #a5854d 1300px, #a6804a 1600px, #9d7d50 1880px, #8b7659 2220px, #746d66 2600px, #5c6672 2880px); }
.menubar > *, .status svg { filter: drop-shadow(0 2px 3px rgba(0, 0, 0, .2)); }
.apple { width: 33px; height: 33px; margin-top: -5px; }
.app-name { margin-left: 38px; font-size: 25.5px; line-height: 30px; margin-top: -2px; }
.menus { display: flex; gap: 40px; margin: -7px 0 0 41px; font-family: "Noto Sans CJK KR", sans-serif; font-size: 25px; line-height: 36px; white-space: nowrap; }
.status { display: flex; align-items: center; margin-left: auto; }
.status .st-chat { margin-top: -2px; }
.st-docker { margin-left: 46px; }
.st-play { margin-left: 40px; }
.st-bat { margin-left: 36px; }
.st-a { margin-left: 39px; }
.st-wifi { margin-left: 42px; }
.st-find { margin-left: 38px; }
.st-ctl { margin-left: 37px; }
.st-siri { margin-left: 34px; }
.clock { margin: -3px 0 0 32px; font-size: 25.8px; line-height: 36px; white-space: nowrap; }
.t-n { font: 700 14px Inter, sans-serif; fill: #5e4a3c; }
.t-a { font: 500 24px Inter, sans-serif; fill: #f2f0ec; }

/* browser window */
.window { position: relative; height: 1636px; margin-top: 2px; border-radius: 20px; background: #e1e2e6; box-shadow: 0 0 0 1.5px #0b0905, 0 40px 44px -8px rgba(0, 0, 0, .92); }
.tabstrip { display: flex; height: 80px; padding-left: 34px; border-radius: 20px 20px 0 0; box-shadow: inset 0 2px 0 #f1f2f5; }
.lights { display: flex; gap: 16px; margin-top: 29px; }
.lights i { width: 24px; height: 24px; border-radius: 50%; }
.red { background: #ec6a5e; }
.yellow { background: #f4be4f; }
.green { background: #61c454; }
.tab { display: flex; align-items: center; gap: 16px; width: 431px; height: 62px; margin: 18px 0 0 32px; padding: 2px 0 0 18px; border-radius: 14px 14px 0 0; background: #fff; font-size: 25.8px; white-space: nowrap; }
.spinner { width: 28px; height: 28px; border: 4px solid #67d3b1; border-radius: 50%; }
.tab span { margin-top: -3px; }
.plus { margin: 36px 0 0 21px; }
.scene { margin-left: auto; }

.toolbar { display: flex; align-items: center; height: 78px; padding: 0 7px 2px 7px; border-bottom: 2px solid #e6e6e6; border-radius: 20px 20px 0 0; background: #fff; }
.address { display: flex; align-items: center; width: 2088px; height: 56px; margin-left: -1px; padding: 0 20px; border-radius: 14px; background: #eff0f2; font-size: 27.600px; white-space: nowrap; }
.address > svg:first-child { margin-left: -1px; }
.host { margin: -3px 0 0 13px; }
.page-name { margin: -3px 0 0 14px; color: #5f6063; letter-spacing: .1px; }
.share { margin-left: auto; }
.bar { width: 2px; height: 26px; background: #cfd0d2; }
.address .bar { margin: 0 17px 0 21px; }
.puzzle { margin: 0 22px 0 24px; }
.exts { display: flex; margin-left: 7px; }
.exts svg { width: 62px; height: 36px; }
.exts svg:not(:first-child):not(:nth-child(6)) { height: 32px; margin-top: 2px; }

.body { display: flex; height: 1478px; overflow: hidden; border-radius: 0 0 20px 20px; background: #fff; }
.page { width: 2758px; height: 1478px; padding: 16px; overflow: hidden; font-family: "Noto Sans CJK KR", sans-serif; font-size: 31px; letter-spacing: -1.32px; word-spacing: 2.5px; line-height: 39px; color: #000; }
.topnav { height: 119px; padding: 35px 39px; background: #ec6443; color: #fff; letter-spacing: -1.5px; }
h1 { margin: 35px 0 48px; font: 600 62px/78px "Noto Sans", sans-serif; letter-spacing: -2.75px; word-spacing: 6px; }
.filters { display: flex; align-items: flex-start; height: 47px; margin: 0 0 33px 10px; white-space: nowrap; }
.radio { width: 26px; height: 26px; margin-top: 8px; border: 2px solid #767676; border-radius: 50%; }
.radio.on { border-color: #e5599f; background: radial-gradient(#e5599f 7.500px, #fff 8.500px); }
.male { width: 83px; margin-left: 14px; letter-spacing: -1.500px; }
.female { width: 106px; margin-left: 13px; letter-spacing: -1.600px; }
.select { display: flex; align-items: center; justify-content: space-between; height: 38px; margin: 6px 9px 0 0; padding: 0 6px 0 9px; border: 2px solid #767676; border-radius: 5px; font: 26.670px "Liberation Sans", sans-serif; letter-spacing: 0; word-spacing: 0; }
.age { width: 154px; }
.job { width: 296px; padding-left: 7px; }
button { width: 115px; height: 43px; margin: 4px 0 0 -1px; padding: 0; border: 2px solid #767676; border-radius: 6px; background: #efefef; font: 26.670px "Liberation Sans", sans-serif; color: #000; }
article { height: 230px; }
h3 { margin: 0 0 36.200px; font: 600 36.500px/45px "Noto Sans", sans-serif; letter-spacing: -1.3px; word-spacing: 1.6px; color: #0000e6; }
h3 a { text-decoration: underline; text-decoration-thickness: 3px; text-underline-offset: 3px; }
p { margin: 0 0 32px; }

.scroll { width: 32px; padding: 0 6px; border: solid #e8e8e8; border-width: 0 4px 0 2px; background: #fafafa; }
.scroll i { width: 16px; height: 20px; border-radius: 8px; background: #c1c1c1; }

.side { display: flex; flex-direction: column; align-items: center; width: 90px; padding: 24px 2px 0 0; }
.ring { width: 44px; height: 44px; border-radius: 50%; background: radial-gradient(#fff 8px, transparent 9px), linear-gradient(120deg, #6fee5b 25%, #66dba8 60%, #57bdf0); }
.rule { width: 48px; height: 2px; margin: 24px 0 30px; background: #d0d0d0; }
.apps { display: flex; flex-direction: column; gap: 48px; }
.apps svg { width: 40px; height: 40px; }
.pin { margin-top: 286px; }
.t-web { font: 800 11.500px Inter, sans-serif; fill: #fff; }
.t-tr { font: 700 12px "Noto Sans CJK JP", "Noto Sans CJK KR", sans-serif; fill: #fff; }
.t-mail { font: 900 14.500px Inter, sans-serif; fill: #43a34e; }

/* dock */
.dock-layer { position: absolute; left: 0; right: 0; bottom: 10px; display: flex; justify-content: center; }
.dock { display: flex; gap: 20px; height: 102px; padding: 14px; border: 2px solid rgba(240, 190, 170, .4); border-radius: 38px; background: linear-gradient(180deg, rgba(166, 108, 96, .75), rgba(190, 110, 80, 0) 70%), linear-gradient(90deg, #a3746a 0, #c97458 120px, #d9784f 300px, #dc8756 440px, #cc7056 620px, #dc8856 860px, #db7c57 1060px, #d66c54 1260px, #cf6757 1600px, #dd7458 1852px); background-clip: padding-box; box-shadow: 0 0 110px rgba(0, 0, 0, .3); }
.item { display: flex; flex-direction: column; align-items: center; width: 64px; }
.item svg { width: 64px; height: 64px; filter: drop-shadow(0 1px 1px rgba(60, 20, 10, .4)); }
.petals rect { mix-blend-mode: multiply; }
.run::after { content: ""; flex: none; width: 8px; height: 8px; margin-top: 10px; border-radius: 50%; background: #550300; }
.wide::after { content: ""; flex: none; width: 80px; height: 8px; margin-top: 10px; border-radius: 4px; background: #5c0300; }
.sep { width: 18px; height: 74px; margin-top: -2px; background: linear-gradient(#933d22, #933d22) center / 2px 100% no-repeat; }
.t-mon { font: 700 13.500px "Noto Sans CJK KR", sans-serif; fill: #fff; }
.t-day { font: 300 40px Inter, sans-serif; letter-spacing: -2px; fill: #2b2b2b; }
.t-badge { font: 400 20px Inter, sans-serif; fill: #fff; }
.t-p { font: 700 19px Inter, sans-serif; fill: #fff; }
.t-term { font: 700 17px "Liberation Mono", monospace; fill: #fff; }
.t-ij { font: 700 18px "DejaVu Sans Mono", monospace; letter-spacing: -2px; fill: #fff; }
.t-talk { font: 700 15px "Noto Sans", sans-serif; letter-spacing: -.3px; fill: #f5e14b; }
```
